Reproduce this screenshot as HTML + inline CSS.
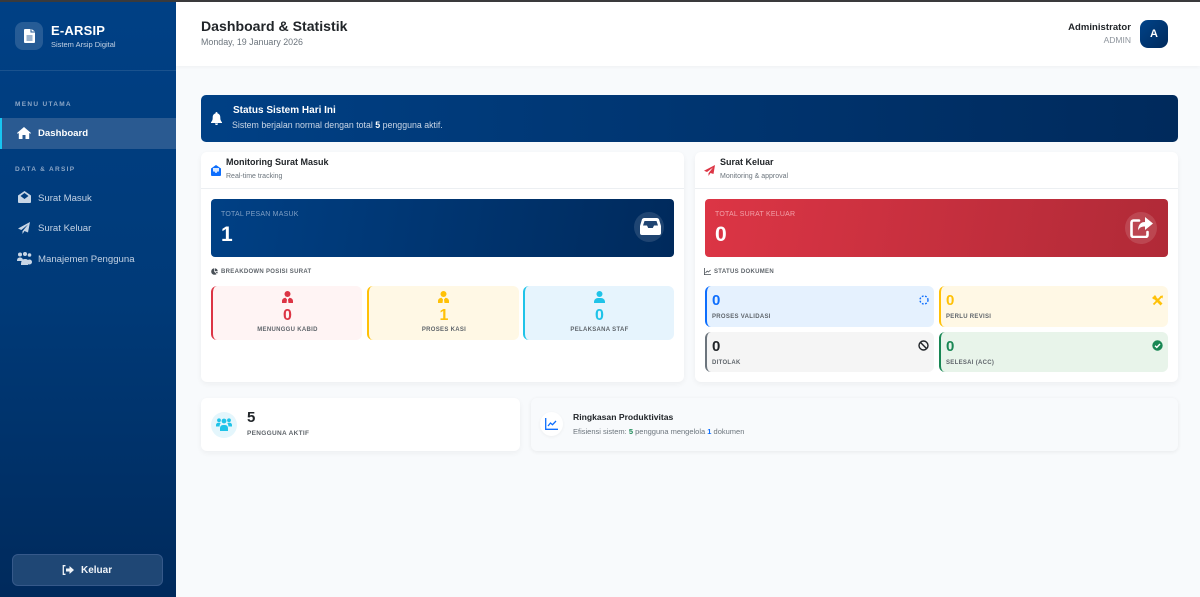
<!DOCTYPE html>
<html><head><meta charset="utf-8"><style>
*{box-sizing:border-box;margin:0;padding:0}
html,body{width:1200px;height:597px;overflow:hidden;background:#f8fafc;font-family:"Liberation Sans",sans-serif;color:#212529}
.a{position:absolute}
.t{position:absolute;white-space:nowrap;line-height:1}
svg{position:absolute;display:block}
.card{position:absolute;background:#fff;border-radius:6px;box-shadow:0 2px 6px rgba(0,0,0,.05)}
.st{position:absolute;border-radius:6px;border-left:2px solid}
.lb{font-size:6px;letter-spacing:.3px;font-weight:700;color:#5f656b}
.nav{font-size:9.600px;color:#c3d2e4}
</style></head><body>
<div class="a" style="left:0;top:0;width:1200px;height:2px;background:#3a3a3c;z-index:9"></div>
<div class="a" style="left:0;top:2px;width:176px;height:595px;background:linear-gradient(180deg,#004085 0%,#003a78 50%,#002a5c 100%)"></div>
<div class="a" style="left:0;top:70px;width:176px;height:1px;background:rgba(255,255,255,.1)"></div>
<div class="a" style="left:15px;top:22px;width:28px;height:28px;border-radius:8px;background:rgba(255,255,255,.15)"></div>
<svg style="left:24px;top:29px" width="11" height="14" viewBox="0 0 11 14"><path fill="#fff" d="M1 0h5.500v3.500H11V13a1 1 0 0 1-1 1H1a1 1 0 0 1-1-1V1a1 1 0 0 1 1-1zM7.500 0 11 2.500H7.500z"/><path stroke="#3b6a9e" stroke-width="1" d="M2.500 7h6M2.500 9h6M2.500 11h6"/></svg>
<div class="t" style="left:51px;top:24px;font-size:13px;font-weight:700;color:#fff;letter-spacing:.2px">E-ARSIP</div>
<div class="t" style="left:51px;top:41px;font-size:7.500px;color:#c3d2e4">Sistem Arsip Digital</div>
<div class="t" style="left:15px;top:102px;font-size:6.500px;font-weight:700;color:#8ba6c6;letter-spacing:1.300px">MENU UTAMA</div>
<div class="a" style="left:0;top:118px;width:176px;height:31px;background:#2a5a91;border-left:2px solid #17c5f2"></div>
<svg style="left:17px;top:127px" width="14" height="12" viewBox="0 0 14 12"><path fill="#fff" d="M7 0 14 6l-.7.8L12.200 6v6H8.500V8h-3v4H1.800V6L.7 6.800 0 6z"/></svg>
<div class="t" style="left:38px;top:129px;font-size:9.600px;font-weight:700;color:#fff">Dashboard</div>
<div class="t" style="left:15px;top:167px;font-size:6.500px;font-weight:700;color:#8ba6c6;letter-spacing:1.300px">DATA &amp; ARSIP</div>
<svg style="left:18px;top:191px" width="13" height="12" viewBox="0 0 13 12"><path fill="#c8d6e6" d="M6.500 0 13 4.500V11a1 1 0 0 1-1 1H1a1 1 0 0 1-1-1V4.500zM2.500 5 6.500 8l4-3-4-3z"/></svg>
<div class="t nav" style="left:38px;top:194px">Surat Masuk</div>
<svg style="left:18px;top:222px" width="12" height="12" viewBox="0 0 12 12"><path fill="#c8d6e6" d="M12 0 10 10.500 6.500 9 4.500 12V9.300L10 2.500 3.300 8 0 6.500z"/></svg>
<div class="t nav" style="left:38px;top:224px">Surat Keluar</div>
<svg style="left:17px;top:252px" width="15" height="13" viewBox="0 0 15 13"><g fill="#c8d6e6"><circle cx="3" cy="2.500" r="2"/><circle cx="8" cy="2" r="2"/><circle cx="12.500" cy="3" r="1.800"/><path d="M0 9c0-2.500 1-3.500 3-3.500S6 6.500 6 9zM4 13c0-4 1-6 4-6 2 0 3 .8 3.500 2a3 3 0 0 0 0 4z"/><circle cx="12.500" cy="10" r="2.500"/></g></svg>
<div class="t nav" style="left:38px;top:255px">Manajemen Pengguna</div>
<div class="a" style="left:12px;top:554px;width:151px;height:32px;border-radius:6px;background:#1f4775;border:1px solid #36598a"></div>
<svg style="left:62px;top:565px" width="12" height="10" viewBox="0 0 12 10"><path fill="none" stroke="#f0f4f8" stroke-width="1.300" d="M3.500.7H1.300v8.600h2.200"/><path fill="#f0f4f8" d="M4 3.500h3.500V1L12 5 7.500 9V6.500H4z"/></svg>
<div class="t" style="left:81px;top:566px;font-size:10px;font-weight:700;color:#f0f4f8">Keluar</div>

<div class="a" style="left:176px;top:2px;width:1024px;height:64px;background:#fff;box-shadow:0 1px 4px rgba(0,0,0,.04)"></div>
<div class="t" style="left:201px;top:19px;font-size:14.100px;font-weight:700;color:#212529">Dashboard &amp; Statistik</div>
<div class="t" style="left:201px;top:38px;font-size:8.900px;color:#6c757d">Monday, 19 January 2026</div>
<div class="t" style="right:69px;top:23px;font-size:9.500px;font-weight:700;color:#212529;letter-spacing:.05px">Administrator</div>
<div class="t" style="right:69px;top:36px;font-size:8.500px;color:#8d949c">ADMIN</div>
<div class="a" style="left:1140px;top:20px;width:28px;height:28px;border-radius:8px;background:linear-gradient(135deg,#004389,#002a5c)"></div>
<div class="t" style="left:1140px;width:28px;text-align:center;top:29px;font-size:11px;font-weight:700;color:#fff">A</div>

<div class="a" style="left:201px;top:95px;width:977px;height:47px;border-radius:5px;background:linear-gradient(90deg,#004085,#002a5c)"></div>
<svg style="left:211px;top:112px" width="11" height="13" viewBox="0 0 11 13"><path fill="#fff" d="M5.500 0a1 1 0 0 1 1 1v.4C8.500 1.900 9.300 3.500 9.300 5.500c0 2.500.5 3.300 1.700 4.700v.8H0v-.8c1.200-1.400 1.700-2.200 1.700-4.700 0-2 .8-3.600 2.800-4.100V1a1 1 0 0 1 1-1zM4 11.500h3a1.500 1.500 0 0 1-3 0z"/></svg>
<div class="t" style="left:233px;top:106px;font-size:10px;font-weight:700;color:#fff">Status Sistem Hari Ini</div>
<div class="t" style="left:232px;top:121px;font-size:8.800px;color:#c9d6e6">Sistem berjalan normal dengan total <b style="color:#fff">5</b> pengguna aktif.</div>

<div class="card" style="left:201px;top:152px;width:483px;height:230px"></div>
<div class="a" style="left:201px;top:188px;width:483px;height:1px;background:#eceff2"></div>
<svg style="left:211px;top:165px" width="10" height="11" viewBox="0 0 10 11"><path fill="#0d6efd" d="M5 0 10 3.500V10a1 1 0 0 1-1 1H1a1 1 0 0 1-1-1V3.500z"/><path fill="#d8e8ff" d="M2 3h6v3.500H6.500L5.500 8h-1L3.500 6.500H2z"/></svg>
<div class="t" style="left:226px;top:158px;font-size:9px;font-weight:700;color:#212529">Monitoring Surat Masuk</div>
<div class="t" style="left:226px;top:173px;font-size:7px;color:#6c757d">Real-time tracking</div>
<div class="a" style="left:211px;top:199px;width:463px;height:58px;border-radius:4px;background:linear-gradient(100deg,#004085,#002a5c)"></div>
<div class="t" style="left:221px;top:211px;font-size:7px;color:#7f9fc4;letter-spacing:.2px">TOTAL PESAN MASUK</div>
<div class="t" style="left:221px;top:224px;font-size:21px;font-weight:700;color:#fff">1</div>
<div class="a" style="left:634px;top:212px;width:30px;height:30px;border-radius:50%;background:rgba(255,255,255,.12)"></div>
<svg style="left:640px;top:218px" width="21" height="17" viewBox="0 0 21 17"><path fill="#fff" fill-rule="evenodd" d="M4 0h13a2.500 2.500 0 0 1 2 1.200L21 8v7a2 2 0 0 1-2 2H2a2 2 0 0 1-2-2V8L2 1.200A2.500 2.500 0 0 1 4 0zm.5 3L3 7.500h4l1.200 2.500h4.600L14 7.500h4L16.500 3z"/></svg>
<svg style="left:211px;top:268px" width="7" height="7" viewBox="0 0 7 7"><circle cx="3.500" cy="3.500" r="3.300" fill="#495057"/><path stroke="#fff" stroke-width=".7" d="M3.500 3.500V0M3.500 3.500H7M3.500 3.500 6 6"/></svg>
<div class="t lb" style="left:221px;top:269px">BREAKDOWN POSISI SURAT</div>

<div class="st" style="left:211px;top:286px;width:151px;height:54px;background:#fff4f4;border-color:#dc3545"></div>
<div class="st" style="left:367px;top:286px;width:152px;height:54px;background:#fff8e5;border-color:#ffc107"></div>
<div class="st" style="left:523px;top:286px;width:151px;height:54px;background:#e6f4fd;border-color:#1fc3e8"></div>
<svg style="left:282px;top:291px" width="11" height="12" viewBox="0 0 11 12"><circle cx="5.500" cy="3" r="3" fill="#dc3545"/><path fill="#dc3545" d="M0 12V10c0-2 1.500-3 3.500-3.300L5 8.500 4.500 12zM11 12V10c0-2-1.500-3-3.500-3.300L6 8.500 6.500 12z"/></svg>
<svg style="left:438px;top:291px" width="11" height="12" viewBox="0 0 11 12"><circle cx="5.500" cy="3" r="3" fill="#ffc107"/><path fill="#ffc107" d="M0 12V10c0-2 1.500-3 3.500-3.300L5 8.500 4.500 12zM11 12V10c0-2-1.500-3-3.500-3.300L6 8.500 6.500 12z"/></svg>
<svg style="left:594px;top:291px" width="11" height="12" viewBox="0 0 11 12"><circle cx="5.500" cy="3" r="3" fill="#1fc3e8"/><path fill="#1fc3e8" d="M0 12v-1c0-2.500 2-4 4-4h3c2 0 4 1.500 4 4v1z"/></svg>
<div class="t" style="left:211px;width:153px;text-align:center;top:308px;font-size:16px;font-weight:700;color:#dc3545">0</div>
<div class="t" style="left:367px;width:154px;text-align:center;top:308px;font-size:16px;font-weight:700;color:#ffc107">1</div>
<div class="t" style="left:523px;width:153px;text-align:center;top:308px;font-size:16px;font-weight:700;color:#1fc3e8">0</div>
<div class="t lb" style="left:211px;width:153px;text-align:center;top:327px">MENUNGGU KABID</div>
<div class="t lb" style="left:367px;width:154px;text-align:center;top:327px">PROSES KASI</div>
<div class="t lb" style="left:523px;width:153px;text-align:center;top:327px">PELAKSANA STAF</div>

<div class="card" style="left:695px;top:152px;width:483px;height:230px"></div>
<div class="a" style="left:695px;top:188px;width:483px;height:1px;background:#eceff2"></div>
<svg style="left:704px;top:165px" width="11" height="11" viewBox="0 0 11 11"><path fill="#dc3545" d="M11 0 9.500 9 6.500 8 4.500 11V8.200L9 2.500 3 7 0 5.800z"/></svg>
<div class="t" style="left:720px;top:158px;font-size:9px;font-weight:700;color:#212529">Surat Keluar</div>
<div class="t" style="left:720px;top:173px;font-size:7px;color:#6c757d">Monitoring &amp; approval</div>
<div class="a" style="left:705px;top:199px;width:463px;height:58px;border-radius:4px;background:linear-gradient(100deg,#dc3545,#b02a37)"></div>
<div class="t" style="left:715px;top:211px;font-size:7px;color:#f2a0a8;letter-spacing:.2px">TOTAL SURAT KELUAR</div>
<div class="t" style="left:715px;top:224px;font-size:21px;font-weight:700;color:#fff">0</div>
<div class="a" style="left:1125px;top:212px;width:32px;height:32px;border-radius:50%;background:rgba(255,255,255,.13)"></div>
<svg style="left:1130px;top:217px" width="24" height="21" viewBox="0 0 24 21"><path fill="none" stroke="#fff" stroke-width="2.600" stroke-linecap="round" d="M9 3.500H3.500a2 2 0 0 0-2 2V18a2 2 0 0 0 2 2h12a2 2 0 0 0 2-2v-3"/><path fill="#fff" d="M15 0l8 6.500L15 13V9.500c-3.500 0-5.500 1-7 4 0-5 2.500-8.500 7-8.500z"/></svg>
<svg style="left:704px;top:268px" width="7" height="7" viewBox="0 0 7 7"><path fill="none" stroke="#495057" stroke-width=".8" d="M.4 0v6.600H7M1.500 5l1.700-2 1.300 1L6.500 2"/></svg>
<div class="t lb" style="left:714px;top:269px">STATUS DOKUMEN</div>

<div class="st" style="left:705px;top:286px;width:229px;height:41px;background:#e5f1fe;border-color:#0d6efd"></div>
<div class="st" style="left:939px;top:286px;width:229px;height:41px;background:#fff8e5;border-color:#ffc107"></div>
<div class="st" style="left:705px;top:332px;width:229px;height:40px;background:#f5f5f5;border-color:#6c757d"></div>
<div class="st" style="left:939px;top:332px;width:229px;height:40px;background:#e8f4ea;border-color:#198754"></div>
<div class="t" style="left:712px;top:293px;font-size:15px;font-weight:700;color:#0d6efd">0</div>
<div class="t" style="left:946px;top:293px;font-size:15px;font-weight:700;color:#ffc107">0</div>
<div class="t" style="left:712px;top:339px;font-size:15px;font-weight:700;color:#212529">0</div>
<div class="t" style="left:946px;top:339px;font-size:15px;font-weight:700;color:#198754">0</div>
<div class="t lb" style="left:712px;top:314px">PROSES VALIDASI</div>
<div class="t lb" style="left:946px;top:314px">PERLU REVISI</div>
<div class="t lb" style="left:712px;top:360px">DITOLAK</div>
<div class="t lb" style="left:946px;top:360px">SELESAI (ACC)</div>
<svg style="left:919px;top:295px" width="10" height="10" viewBox="0 0 10 10"><circle cx="5" cy="5" r="4" fill="none" stroke="#0d6efd" stroke-width="1.400" stroke-dasharray="1.800 1.500"/></svg>
<svg style="left:1152px;top:295px" width="11" height="11" viewBox="0 0 11 11"><path stroke="#ffc107" stroke-width="1.900" d="M1.500 9.500l8-8"/><path stroke="#ffc107" stroke-width="2.800" d="M2 2l7.500 7.500"/><path fill="#ffc107" d="M0 3 3 0l1.500 2-2.500 2.500zM8 1l3-.5-.5 3z"/></svg>
<svg style="left:918px;top:340px" width="11" height="11" viewBox="0 0 11 11"><circle cx="5.500" cy="5.500" r="4.500" fill="none" stroke="#212529" stroke-width="1.400"/><path stroke="#212529" stroke-width="1.400" d="M2.300 2.300l6.400 6.400"/></svg>
<svg style="left:1152px;top:340px" width="11" height="11" viewBox="0 0 11 11"><circle cx="5.500" cy="5.500" r="5.200" fill="#198754"/><path fill="none" stroke="#fff" stroke-width="1.400" d="M3 5.700l1.800 1.700L8 4"/></svg>

<div class="card" style="left:201px;top:398px;width:319px;height:53px"></div>
<div class="a" style="left:211px;top:412px;width:26px;height:26px;border-radius:50%;background:#e4f6fc"></div>
<svg style="left:216px;top:418px" width="16" height="13" viewBox="0 0 16 13"><g fill="#1fc3e8"><circle cx="3" cy="2.300" r="1.900"/><circle cx="13" cy="2.300" r="1.900"/><circle cx="8" cy="3" r="2.400"/><path d="M0 8.500V7c0-1.300 1-2.300 2.500-2.300h1c.5 0 .9.100 1.200.4C4 5.900 3.600 7 3.600 8.500zM16 8.500V7c0-1.300-1-2.300-2.500-2.300h-1c-.5 0-.9.100-1.200.4.700.8 1.100 1.900 1.100 3.400zM4 13v-2.500C4 8.500 5 7 7 7h2c2 0 3 1.500 3 3.500V13z"/></g></svg>
<div class="t" style="left:247px;top:410px;font-size:15px;font-weight:700;color:#212529">5</div>
<div class="t lb" style="left:247px;top:431px;font-size:6.500px;letter-spacing:.3px">PENGGUNA AKTIF</div>

<div class="a" style="left:531px;top:398px;width:647px;height:53px;border-radius:6px;background:#f8fafc;box-shadow:0 1px 4px rgba(0,0,0,.07)"></div>
<div class="a" style="left:540px;top:412px;width:23px;height:24px;border-radius:50%;background:#fff;box-shadow:0 1px 3px rgba(0,0,0,.05)"></div>
<svg style="left:545px;top:418px" width="13" height="12" viewBox="0 0 13 12"><path fill="none" stroke="#0d6efd" stroke-width="1.300" d="M.7 0v11.300H13M3 8l2.500-3 2 1.700L11 3"/></svg>
<div class="t" style="left:573px;top:413px;font-size:8.600px;font-weight:700;color:#212529">Ringkasan Produktivitas</div>
<div class="t" style="left:573px;top:428px;font-size:7.500px;color:#6c757d">Efisiensi sistem: <b style="color:#198754">5</b> pengguna mengelola <b style="color:#0d6efd">1</b> dokumen</div>
</body></html>
